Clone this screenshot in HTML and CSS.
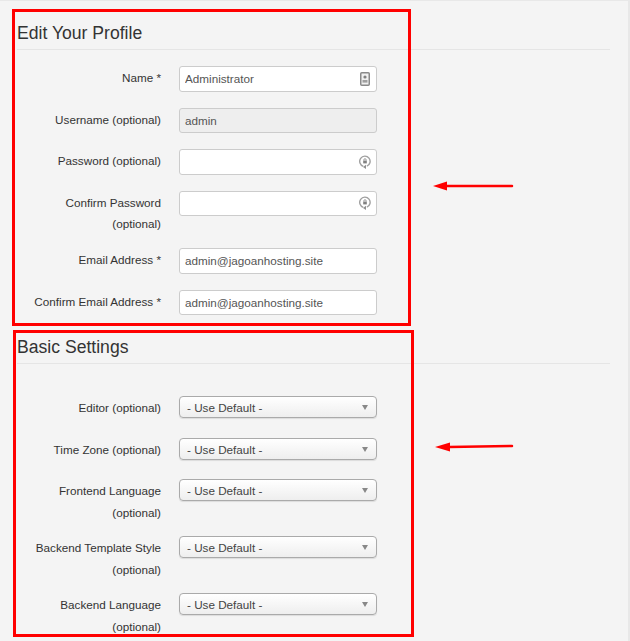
FILE: index.html
```html
<!DOCTYPE html>
<html lang="en">
<head>
    <meta charset="UTF-8">
    <meta name="viewport" content="width=device-width, initial-scale=1.0">
    <title>Edit Your Profile</title>
    <link rel="stylesheet" href="styles.css">
</head>
<body>
    <form class="page">
        <section class="profile">
            <h2>Edit Your Profile</h2>

            <div class="row">
                <label>Name *</label>
                <div class="field">
                    <input type="text" value="Administrator">
                    <svg class="icon" width="12" height="14" viewBox="0 0 12 14">
                        <rect x="1.750" y="0.750" width="8.500" height="12.500" rx="1" fill="#f0f0f0" stroke="#8a8a8a" stroke-width="1.500"/>
                        <circle cx="6" cy="5" r="1.600" fill="#808080"/>
                        <rect x="3.500" y="8" width="5" height="2.600" fill="#a0a0a0"/>
                    </svg>
                </div>
            </div>

            <div class="row">
                <label>Username (optional)</label>
                <div class="field disabled">
                    <input type="text" value="admin" disabled>
                </div>
            </div>

            <div class="row">
                <label>Password (optional)</label>
                <div class="field">
                    <input type="password">
                    <svg class="icon" width="12" height="14" viewBox="0 0 12 14">
                        <path d="M4.300 11.300A5.200 5.200 0 1 1 7.800 11.200" fill="none" stroke="#a0a0a0" stroke-width="1.400"/>
                        <path d="M7 9.800v4.200L4 12z" fill="#909090"/>
                        <rect x="4.200" y="5.600" width="3.600" height="2.800" fill="#808080"/>
                        <path d="M4.900 5.600V4.800a1.100 1.100 0 0 1 2.200 0V5.600" fill="none" stroke="#808080" stroke-width="0.800"/>
                    </svg>
                </div>
            </div>

            <div class="row row-tall">
                <label>Confirm Password (optional)</label>
                <div class="field">
                    <input type="password">
                    <svg class="icon" width="12" height="14" viewBox="0 0 12 14">
                        <path d="M4.300 11.300A5.200 5.200 0 1 1 7.800 11.200" fill="none" stroke="#a0a0a0" stroke-width="1.400"/>
                        <path d="M7 9.800v4.200L4 12z" fill="#909090"/>
                        <rect x="4.200" y="5.600" width="3.600" height="2.800" fill="#808080"/>
                        <path d="M4.900 5.600V4.800a1.100 1.100 0 0 1 2.200 0V5.600" fill="none" stroke="#808080" stroke-width="0.800"/>
                    </svg>
                </div>
            </div>

            <div class="row">
                <label>Email Address *</label>
                <div class="field">
                    <input type="text" value="admin@jagoanhosting.site">
                </div>
            </div>

            <div class="row">
                <label>Confirm Email Address *</label>
                <div class="field">
                    <input type="text" value="admin@jagoanhosting.site">
                </div>
            </div>
        </section>

        <section class="settings">
            <h2>Basic Settings</h2>

            <div class="row">
                <label>Editor (optional)</label>
                <div class="select"><span>- Use Default -</span><i class="caret"></i></div>
            </div>

            <div class="row">
                <label>Time Zone (optional)</label>
                <div class="select"><span>- Use Default -</span><i class="caret"></i></div>
            </div>

            <div class="row row-tall">
                <label>Frontend Language (optional)</label>
                <div class="select"><span>- Use Default -</span><i class="caret"></i></div>
            </div>

            <div class="row row-tall">
                <label>Backend Template Style (optional)</label>
                <div class="select"><span>- Use Default -</span><i class="caret"></i></div>
            </div>

            <div class="row row-tall">
                <label>Backend Language (optional)</label>
                <div class="select"><span>- Use Default -</span><i class="caret"></i></div>
            </div>
        </section>
    </form>

    <!-- red annotations drawn on top of the screenshot -->
    <div class="mark mark-one"></div>
    <div class="mark mark-two"></div>
    <svg class="arrow arrow-one" width="82" height="15" viewBox="0 0 82 15">
        <path d="M0 8L14 3.500V12.500z" fill="#f00"/>
        <path d="M13 8H79" stroke="#f00" stroke-width="2.500" stroke-linecap="round"/>
    </svg>
    <svg class="arrow arrow-two" width="80" height="15" viewBox="0 0 80 15">
        <path d="M0 8L15 3.500V12.500z" fill="#f00"/>
        <path d="M14 8L77 7" stroke="#f00" stroke-width="2.500" stroke-linecap="round"/>
    </svg>
</body>
</html>
```

FILE: styles.css
```css
html, body {
    height: 100%;
}

body {
    box-sizing: border-box;
    margin: 0;
    overflow: hidden;
    background-color: #f4f4f4;
    border-top: 1px solid #e8e8e8;
    border-right: 2px solid #e8e8e8;
    font-family: "Liberation Sans", Arial, sans-serif;
    font-size: 11.700px;
    color: #333;
}

.page {
    padding: 21px 18px 0 17px;
}

h2 {
    margin: 0;
    padding-bottom: 4px;
    border-bottom: 1px solid #e5e5e5;
    font-size: 17.600px;
    font-weight: normal;
    line-height: 23px;
    color: #333;
}

.profile h2 {
    margin-bottom: 16px;
}

.settings {
    margin-top: 21px;
}

.settings h2 {
    margin-bottom: 32px;
}

.row {
    display: flex;
    align-items: flex-start;
    margin-bottom: 16px;
}

.row-tall {
    margin-bottom: 13.500px;
}

label {
    width: 144px;
    margin-right: 18px;
    padding-top: 1px;
    text-align: right;
    line-height: 21.500px;
    color: #333;
}

.field {
    display: flex;
    align-items: center;
    box-sizing: border-box;
    width: 198px;
    height: 25.500px;
    padding: 0 5px;
    background: #fff;
    border: 1px solid #ccc;
    border-radius: 3px;
}

.field input {
    flex: 1;
    min-width: 0;
    padding: 0;
    border: none;
    background: none;
    outline: none;
    font: inherit;
    color: #555;
}

.field.disabled {
    background: #eee;
}

.icon {
    flex: none;
}

.settings .row {
    margin-bottom: 19px;
}

.settings .row-tall {
    margin-bottom: 13px;
}

.select {
    display: flex;
    align-items: center;
    justify-content: space-between;
    box-sizing: border-box;
    width: 198px;
    height: 22px;
    padding: 1px 8px 0 7px;
    background: linear-gradient(to bottom, #fff, #eee);
    border: 1px solid #aaa;
    border-radius: 4px;
    box-shadow: 0 1px 1px rgba(0, 0, 0, 0.1);
    color: #444;
}

.caret {
    width: 0;
    height: 0;
    border-left: 3.500px solid transparent;
    border-right: 3.500px solid transparent;
    border-top: 5px solid #888;
}

.mark {
    position: absolute;
    box-sizing: border-box;
    border: 3px solid #f00;
}

.mark-one {
    left: 12px;
    top: 9px;
    width: 399px;
    height: 317px;
}

.mark-two {
    left: 13px;
    top: 330px;
    width: 401px;
    height: 307px;
}

.arrow {
    position: absolute;
}

.arrow-one {
    left: 433px;
    top: 178px;
}

.arrow-two {
    left: 435px;
    top: 439px;
}
```
